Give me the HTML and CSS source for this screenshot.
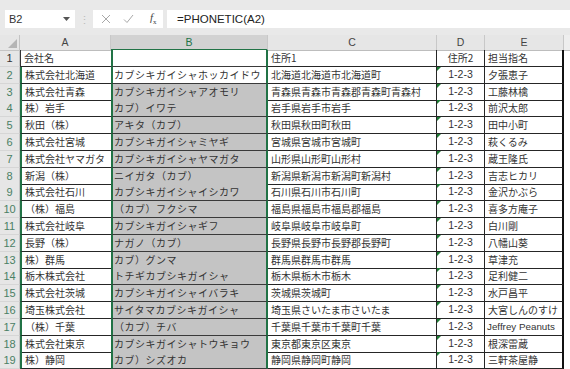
FILE: index.html
```html
<!DOCTYPE html>
<html>
<head lang="ja">
    <meta charset="UTF-8">
    <title>PHONETIC</title>
    <link rel="stylesheet" href="styles.css">
</head>
<body>
<div class="bar">
    <div class="namebox">
        <span>B2</span>
        <svg class="drop" width="7" height="4" viewBox="0 0 7 4"><path d="M0 0h7L3.5 4z" fill="#555"/></svg>
    </div>
    <div class="grip">&#8942;</div>
    <div class="fxbox">
        <svg width="10" height="10" viewBox="0 0 10 10"><path d="M1 1l8 8M9 1l-8 8" stroke="#a8a8a8" stroke-width="1" fill="none"/></svg>
        <svg width="11" height="10" viewBox="0 0 11 10"><path d="M1 5.5l3 3L10 1" stroke="#a8a8a8" stroke-width="1" fill="none"/></svg>
        <span class="fx"><i>f</i><sub>x</sub></span>
    </div>
    <div class="formula">=PHONETIC(A2)</div>
</div>

<div class="sheet">
    <div class="row head">
        <div class="corner"></div>
        <div class="hd">A</div>
        <div class="hd sel">B</div>
        <div class="hd">C</div>
        <div class="hd">D</div>
        <div class="hd">E</div>
        <div class="hd last"></div>
    </div>
    <div class="row first">
        <div class="rh">1</div>
        <div class="c a">会社名</div>
        <div class="c b"></div>
        <div class="c cc">住所1</div>
        <div class="c d">住所2</div>
        <div class="c e">担当指名</div>
        <div class="c f"></div>
    </div>
    <div class="row">
        <div class="rh">2</div>
        <div class="c a">株式会社北海道</div>
        <div class="c b active">カブシキガイシャホッカイドウ</div>
        <div class="c cc">北海道北海道市北海道町</div>
        <div class="c d txt">1-2-3</div>
        <div class="c e">夕張恵子</div>
        <div class="c f"></div>
    </div>
    <div class="row">
        <div class="rh">3</div>
        <div class="c a">株式会社青森</div>
        <div class="c b">カブシキガイシャアオモリ</div>
        <div class="c cc">青森県青森市青森郡青森町青森村</div>
        <div class="c d txt">1-2-3</div>
        <div class="c e">工藤林檎</div>
        <div class="c f"></div>
    </div>
    <div class="row">
        <div class="rh">4</div>
        <div class="c a">株）岩手</div>
        <div class="c b">カブ）イワテ</div>
        <div class="c cc">岩手県岩手市岩手</div>
        <div class="c d txt">1-2-3</div>
        <div class="c e">前沢太郎</div>
        <div class="c f"></div>
    </div>
    <div class="row">
        <div class="rh">5</div>
        <div class="c a">秋田（株）</div>
        <div class="c b">アキタ（カブ）</div>
        <div class="c cc">秋田県秋田町秋田</div>
        <div class="c d txt">1-2-3</div>
        <div class="c e">田中小町</div>
        <div class="c f"></div>
    </div>
    <div class="row">
        <div class="rh">6</div>
        <div class="c a">株式会社宮城</div>
        <div class="c b">カブシキガイシャミヤギ</div>
        <div class="c cc">宮城県宮城市宮城町</div>
        <div class="c d txt">1-2-3</div>
        <div class="c e">萩くるみ</div>
        <div class="c f"></div>
    </div>
    <div class="row">
        <div class="rh">7</div>
        <div class="c a">株式会社ヤマガタ</div>
        <div class="c b">カブシキガイシャヤマガタ</div>
        <div class="c cc">山形県山形町山形村</div>
        <div class="c d txt">1-2-3</div>
        <div class="c e">蔵王隆氏</div>
        <div class="c f"></div>
    </div>
    <div class="row">
        <div class="rh">8</div>
        <div class="c a">新潟（株）</div>
        <div class="c b">ニイガタ（カブ）</div>
        <div class="c cc">新潟県新潟市新潟町新潟村</div>
        <div class="c d txt">1-2-3</div>
        <div class="c e">吉志ヒカリ</div>
        <div class="c f"></div>
    </div>
    <div class="row">
        <div class="rh">9</div>
        <div class="c a">株式会社石川</div>
        <div class="c b">カブシキガイシャイシカワ</div>
        <div class="c cc">石川県石川市石川町</div>
        <div class="c d txt">1-2-3</div>
        <div class="c e">金沢かぶら</div>
        <div class="c f"></div>
    </div>
    <div class="row">
        <div class="rh">10</div>
        <div class="c a">（株）福島</div>
        <div class="c b">（カブ）フクシマ</div>
        <div class="c cc">福島県福島市福島郡福島</div>
        <div class="c d txt">1-2-3</div>
        <div class="c e">喜多方庵子</div>
        <div class="c f"></div>
    </div>
    <div class="row">
        <div class="rh">11</div>
        <div class="c a">株式会社岐阜</div>
        <div class="c b">カブシキガイシャギフ</div>
        <div class="c cc">岐阜県岐阜市岐阜町</div>
        <div class="c d txt">1-2-3</div>
        <div class="c e">白川剛</div>
        <div class="c f"></div>
    </div>
    <div class="row">
        <div class="rh">12</div>
        <div class="c a">長野（株）</div>
        <div class="c b">ナガノ（カブ）</div>
        <div class="c cc">長野県長野市長野郡長野町</div>
        <div class="c d txt">1-2-3</div>
        <div class="c e">八幡山葵</div>
        <div class="c f"></div>
    </div>
    <div class="row">
        <div class="rh">13</div>
        <div class="c a">株）群馬</div>
        <div class="c b">カブ）グンマ</div>
        <div class="c cc">群馬県群馬市群馬</div>
        <div class="c d txt">1-2-3</div>
        <div class="c e">草津充</div>
        <div class="c f"></div>
    </div>
    <div class="row">
        <div class="rh">14</div>
        <div class="c a">栃木株式会社</div>
        <div class="c b">トチギカブシキガイシャ</div>
        <div class="c cc">栃木県栃木市栃木</div>
        <div class="c d txt">1-2-3</div>
        <div class="c e">足利健二</div>
        <div class="c f"></div>
    </div>
    <div class="row">
        <div class="rh">15</div>
        <div class="c a">株式会社茨城</div>
        <div class="c b">カブシキガイシャイバラキ</div>
        <div class="c cc">茨城県茨城町</div>
        <div class="c d txt">1-2-3</div>
        <div class="c e">水戸昌平</div>
        <div class="c f"></div>
    </div>
    <div class="row">
        <div class="rh">16</div>
        <div class="c a">埼玉株式会社</div>
        <div class="c b">サイタマカブシキガイシャ</div>
        <div class="c cc">埼玉県さいたま市さいたま</div>
        <div class="c d txt">1-2-3</div>
        <div class="c e">大宮しんのすけ</div>
        <div class="c f"></div>
    </div>
    <div class="row">
        <div class="rh">17</div>
        <div class="c a">（株）千葉</div>
        <div class="c b">（カブ）チバ</div>
        <div class="c cc">千葉県千葉市千葉町千葉</div>
        <div class="c d txt">1-2-3</div>
        <div class="c e latin">Jeffrey Peanuts</div>
        <div class="c f"></div>
    </div>
    <div class="row">
        <div class="rh">18</div>
        <div class="c a">株式会社東京</div>
        <div class="c b">カブシキガイシャトウキョウ</div>
        <div class="c cc">東京都東京区東京</div>
        <div class="c d txt">1-2-3</div>
        <div class="c e">根深雷蔵</div>
        <div class="c f"></div>
    </div>
    <div class="row">
        <div class="rh">19</div>
        <div class="c a">株）静岡</div>
        <div class="c b">カブ）シズオカ</div>
        <div class="c cc">静岡県静岡町静岡</div>
        <div class="c d txt">1-2-3</div>
        <div class="c e">三軒茶屋静</div>
        <div class="c f"></div>
    </div>
</div>
</body>
</html>
```

FILE: styles.css
```css
* {
    padding: 0;
    margin: 0;
    box-sizing: border-box;
}
body {
    width: 570px;
    height: 369px;
    overflow: hidden;
    background-color: #fff;
    font-family: "Noto Sans CJK JP", "Liberation Sans", sans-serif;
    color: #333;
}

/* formula bar */
.bar {
    height: 35px;
    padding: 10px 0 7px 5px;
    display: flex;
    background-color: #e9e9e9;
}
.namebox {
    width: 70px;
    display: flex;
    align-items: center;
    justify-content: space-between;
    padding: 0 5px 0 4px;
    background-color: #fff;
    font-family: "Liberation Sans", sans-serif;
    font-size: 11px;
    color: #333;
}
.grip {
    width: 18px;
    text-align: center;
    line-height: 18px;
    font-size: 11px;
    color: #bcbcbc;
}
.fxbox {
    width: 70px;
    display: flex;
    align-items: center;
    gap: 12px;
    padding-left: 8px;
    background-color: #fff;
}
.fx {
    font-family: "Liberation Serif", serif;
    font-size: 11px;
    color: #444;
    margin-left: 4px;
}
.fx sub {
    font-size: 7px;
}
.formula {
    flex: 1;
    margin-left: 4px;
    padding-left: 10px;
    background-color: #fff;
    font-family: "Liberation Sans", sans-serif;
    font-size: 11.5px;
    line-height: 18px;
    color: #222;
}

/* grid */
.row {
    display: grid;
    grid-template-columns: 20px 91px 157px 169px 48px 79px 6px;
    height: 16.8px;
}
.row.head {
    height: 15px;
}
.corner {
    background-color: #e6e6e6;
    border-right: 1px solid #c4c4c4;
    border-bottom: 1px solid #c4c4c4;
    position: relative;
}
.corner::after {
    content: "";
    position: absolute;
    right: 2px;
    bottom: 2px;
    border-left: 9px solid transparent;
    border-bottom: 9px solid #b5b5b5;
}
.hd {
    background-color: #e6e6e6;
    border-right: 1px solid #c8c8c8;
    border-bottom: 1px solid #bdbdbd;
    font-family: "Liberation Sans", sans-serif;
    font-size: 10.5px;
    line-height: 14px;
    text-align: center;
    color: #444;
}
.hd.sel {
    background-color: #d2d2d2;
    color: #217346;
    border-bottom: 2px solid #217346;
}
.hd.last {
    background-color: #eeeeee;
    border-right: none;
}
.rh {
    background-color: #e6e6e6;
    border-right: 1px solid #c4c4c4;
    border-bottom: 1px solid #d6d6d6;
    font-family: "Liberation Sans", sans-serif;
    font-size: 11px;
    line-height: 16px;
    text-align: center;
    color: #4a8064;
}
.first .rh {
    color: #333;
}

.c {
    border-bottom: 1px solid #262626;
    font-size: 10px;
    line-height: 15.8px;
    padding-left: 3px;
    white-space: nowrap;
    overflow: hidden;
}
.a {
    border-left: 2px solid #217346;
}
.first .a {
    border-left: 1px solid #333;
}
.b {
    background-color: #c4c4c4;
    border-left: 2px solid #217346;
    border-right: 2px solid #217346;
    border-bottom-color: #3a3a3a;
    padding-left: 1px;
    letter-spacing: 0.5px;
}
.first .b,
.b.active {
    background-color: #fff;
}
.cc {
    border-right: 1px solid #262626;
}
.d {
    border-right: 1px solid #262626;
    text-align: center;
    padding-left: 0;
    font-family: "Liberation Sans", "Noto Sans CJK JP", sans-serif;
    font-size: 10.5px;
    position: relative;
}
.first .d {
    font-family: "Noto Sans CJK JP", sans-serif;
    font-size: 10px;
}
.txt::before {
    content: "";
    position: absolute;
    left: 0;
    top: 0;
    border-top: 4px solid #1e7b34;
    border-right: 4px solid transparent;
}
.e {
    border-right: 2px solid #111;
}
.e.latin {
    font-family: "Liberation Sans", sans-serif;
    font-size: 9.8px;
    padding-left: 2px;
}
.f {
    border-bottom: none;
}
```
